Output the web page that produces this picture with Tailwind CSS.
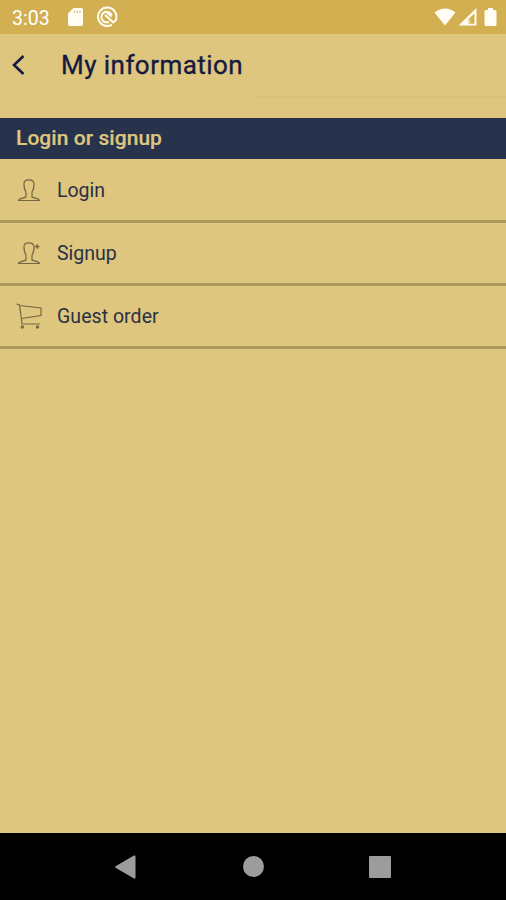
<!DOCTYPE html>
<html lang="en">
<head>
<meta charset="utf-8">
<title>My information</title>
<script src="https://cdn.jsdelivr.net/npm/@tailwindcss/browser@4"></script>
</head>
<body class="w-[506px] h-[900px] overflow-hidden flex flex-col bg-[#dec67e] font-['Roboto',sans-serif]">
  <div class="h-[34px] shrink-0 bg-[#d2b052] flex items-center pl-3 pr-[9px] text-white">
    <span class="w-[55px] text-[19.5px] leading-[34px] pt-[3px]">3:03</span>
    <svg class="w-[17px] h-[20px]" viewBox="0 0 17 20"><path fill="#fffdf4" d="M6.500 1H14a2 2 0 0 1 2 2v14a2 2 0 0 1-2 2H3a2 2 0 0 1-2-2V6.500z"/><path stroke="#dcc581" stroke-width="1.300" d="M7.500 3.500v2.500M10.300 3.500v2.500M13 3.500v2.500"/></svg>
    <svg class="w-[22px] h-[22px] ml-[12px]" viewBox="0 0 22 22" fill="none" stroke="#fffdf4" stroke-width="2"><path d="M16 18.600A9.200 9.200 0 1 1 19.600 14.500L17.500 16"/><path d="M13 15.800A5.300 5.300 0 1 1 15.800 9.500"/><path d="M9 9 18 17" stroke-width="2.200"/><path d="M9 6.500h3.500l3 3v2z" fill="#fffdf4" stroke="none"/></svg>
    <svg class="w-[22px] h-[18px] ml-auto mr-[2px]" viewBox="0 0 22 18"><path fill="#fffdf4" d="M.5 4.500Q11-3.500 21.500 4.500L11 17.500z"/></svg>
    <svg class="w-[20px] h-[20px]" viewBox="0 0 20 20"><path fill="#fffdf4" fill-rule="evenodd" d="M.5 18.500 18.500 1v17.500zM10 16.800h6.500V6.500L10 12.500z"/><path d="M10 12.500h2.500v4.300H10z" fill="#e8d9a6"/></svg>
    <svg class="w-[13px] h-[20px] ml-[6px]" viewBox="0 0 13 20"><path fill="#fffdf4" d="M4 1h5v2h2a1.500 1.500 0 0 1 1.500 1.500v13A1.500 1.500 0 0 1 11 19H2a1.500 1.500 0 0 1-1.500-1.500v-13A1.500 1.500 0 0 1 2 3h2z"/></svg>
  </div>
  <header class="h-[62px] shrink-0 flex items-center pl-[11px] text-[#151a42]">
    <svg class="w-[15px] h-[22px]" viewBox="0 0 15 22" fill="none" stroke="currentColor" stroke-width="2.600"><path d="M12.500 2 3 11l9.500 9"/></svg>
    <h1 class="ml-[35px] text-[26px] leading-[32px] font-normal tracking-[0.45px] [-webkit-text-stroke:0.35px_currentColor]">My information</h1>
  </header>
  <div class="h-px ml-[254px] bg-[#dabf80] shrink-0"></div>
  <main class="flex-1 pt-[21px]">
    <h2 class="h-[41px] bg-[#27324d] text-[#dec67e] pl-4 text-[21px] leading-[41px] font-medium tracking-[0.05px] [-webkit-text-stroke:0.2px_currentColor]">Login or signup</h2>
    <ul class="text-[#2a3045] text-[19.5px]">
      <li class="h-[64px] border-b-3 border-[#ad985c] flex items-center pl-[17px]">
        <svg class="w-[24px] h-[24px]" viewBox="0 0 24 24" fill="none" stroke="#756744" stroke-width="1.200"><path d="M9 19V14C7.500 12 7 10 7 6 7 3 8.500 1.800 12 1.800S17 3 17 6c0 4-.5 6-2 8v5C16 20 21.500 20 22.500 22.500H1.500C2.500 20 8 20 9 19z"/></svg>
        <span class="ml-4 pt-[2px]">Login</span>
      </li>
      <li class="h-[63px] border-b-3 border-[#ad985c] flex items-center pl-[17px]">
        <svg class="w-[24px] h-[24px]" viewBox="0 0 24 24" fill="none" stroke="#756744" stroke-width="1.200"><path d="M9 19V14C7.500 12 7 10 7 6 7 3 8.500 1.800 12 1.800S17 3 17 6c0 4-.5 6-2 8v5C16 20 21.500 20 22.500 22.500H1.500C2.500 20 8 20 9 19z"/><path d="M18 5.500h4.500M20.200 3.300v4.500" stroke-width="1.500"/></svg>
        <span class="ml-4 pt-[2px]">Signup</span>
      </li>
      <li class="h-[63px] border-b-3 border-[#ad985c] flex items-center pl-[16px]">
        <svg class="w-[26px] h-[26px]" viewBox="0 0 26 26" fill="none" stroke="#756744" stroke-width="1.200"><path d="M.5 1 3.500 2 5.500 16.500 6 21H24M3.600 2.500 25 5V12.500L5.500 15.500"/><circle cx="6.300" cy="24" r="1.100" fill="#756744"/><circle cx="21.500" cy="24" r="1.100" fill="#756744"/></svg>
        <span class="ml-[15px] pt-[2px] tracking-[0.05px]">Guest order</span>
      </li>
    </ul>
  </main>
  <nav class="h-[67px] shrink-0 bg-black flex items-center pl-[115px]">
    <svg class="w-[21px] h-[24px]" viewBox="0 0 21 24" fill="#9c9c9c"><path d="M.5 11.300Q0 12 .5 12.700L19 23.500q1.500.5 1.500-1v-21q0-1.500-1.500-1z"/></svg>
    <div class="ml-[107px] w-[21px] h-[21px] rounded-full bg-[#9c9c9c]"></div>
    <div class="ml-[105px] w-[22px] h-[22px] rounded-[1px] bg-[#9c9c9c]"></div>
  </nav>
</body>
</html>
